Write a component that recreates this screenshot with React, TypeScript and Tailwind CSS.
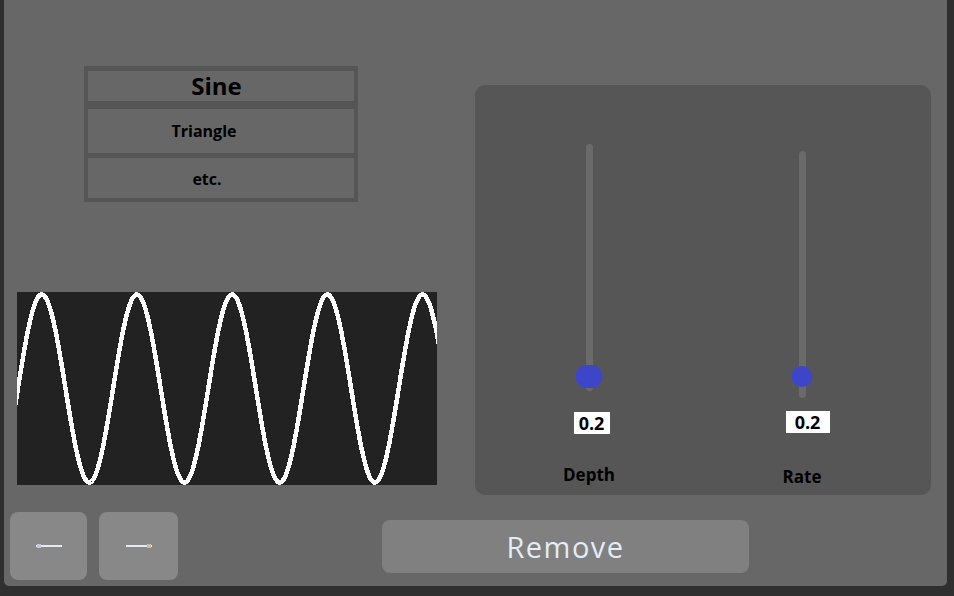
import React from "react";

const W = 420;
const H = 193;

function wavePoints(): string {
  const pts: string[] = [];
  for (let x = -2; x <= W + 2; x += 0.5) {
    const y = 96.5 - 94 * Math.cos((2 * Math.PI * (x - 24.7)) / 95.2);
    pts.push(`${x},${y.toFixed(2)}`);
  }
  return pts.join(" ");
}

function Arrow({ dir }: { dir: "left" | "right" }) {
  return (
    <svg width="28" height="8" viewBox="0 0 28 8" shapeRendering="crispEdges">
      <rect x="1" y="3" width="26" height="2" fill="#e3ecf6" />
      {dir === "left" ? (
        <rect x="2" y="2" width="4" height="4" fill="#b9cbe0" />
      ) : (
        <rect x="22" y="2" width="4" height="4" fill="#c9b9a6" />
      )}
    </svg>
  );
}

export default function App() {
  return (
    <div className="w-[954px] h-[596px] bg-[#2f2f2f] pl-[4px] pr-[7px] pb-[10px] font-['Open_Sans',sans-serif] overflow-hidden">
      <div className="w-full h-full bg-[#676767] rounded-b-[5px] flex flex-col">
        {/* top area */}
        <div className="h-[495px] flex">
          {/* left column */}
          <div className="w-[471px] flex flex-col">
            <div className="mt-[66px] ml-[80px] w-[274px] flex flex-col">
              <div className="h-[39px] border-[4px] border-t-[5px] border-[#555555] flex items-center justify-center pr-[9px]">
                <span className="text-[24px] leading-[30px] font-bold text-black">Sine</span>
              </div>
              <div className="h-[48px] border-x-[4px] border-t-[4px] border-b-0 border-[#555555] flex items-center justify-center pr-[34px]">
                <span className="text-[16px] leading-[22px] font-bold text-black">Triangle</span>
              </div>
              <div className="h-[49px] border-[4px] border-t-[5px] border-[#555555] flex items-center justify-center pr-[28px] pt-[2px]">
                <span className="text-[16px] leading-[22px] font-bold text-black">etc.</span>
              </div>
            </div>
            <div className="mt-[90px] ml-[13px] w-[420px] h-[193px] bg-[#222222]">
              <svg width={W} height={H} viewBox={`0 0 ${W} ${H}`} shapeRendering="crispEdges" className="block">
                <polyline points={wavePoints()} fill="none" stroke="#ffffff" strokeWidth="4.5" />
              </svg>
            </div>
          </div>
          {/* slider panel */}
          <div className="mt-[85px] w-[456px] h-[410px] rounded-[10px] bg-[#565656] flex pl-[74px]">
            {/* Depth */}
            <div className="w-[80px] flex flex-col items-center pt-[59px]">
              <div className="relative w-[7px] h-[247px] rounded-full bg-[#6a6a6a]">
                <div className="absolute left-1/2 -translate-x-1/2 top-[221px] w-[27px] h-[23px] rounded-full bg-[#3d46c9]" />
              </div>
              <div className="mt-[21px] ml-[5px] w-[36px] h-[22px] bg-white flex items-center justify-center">
                <span className="text-[18px] leading-[22px] font-bold text-black">0.2</span>
              </div>
              <div className="mt-[29px] text-[17px] leading-[23px] font-bold text-black">Depth</div>
            </div>
            {/* Rate */}
            <div className="ml-[133px] w-[80px] flex flex-col items-center pt-[66px]">
              <div className="relative w-[7px] h-[247px] rounded-full bg-[#6a6a6a]">
                <div className="absolute left-1/2 -translate-x-1/2 top-[215px] w-[21px] h-[21px] rounded-full bg-[#3d46c9]" />
              </div>
              <div className="mt-[13px] ml-[11px] w-[44px] h-[22px] bg-white flex items-center justify-center">
                <span className="text-[18px] leading-[22px] font-bold text-black">0.2</span>
              </div>
              <div className="mt-[32px] text-[17px] leading-[23px] font-bold text-black">Rate</div>
            </div>
          </div>
        </div>
        {/* bottom row */}
        <div className="mt-[17px] flex items-start">
          <div className="ml-[6px] w-[77px] h-[68px] rounded-[8px] bg-[#888888] flex items-center justify-center">
            <Arrow dir="left" />
          </div>
          <div className="ml-[12px] w-[79px] h-[68px] rounded-[8px] bg-[#888888] flex items-center justify-center">
            <Arrow dir="right" />
          </div>
          <div className="ml-[204px] mt-[8px] w-[367px] h-[53px] rounded-[8px] bg-[#808080] flex items-center justify-center">
            <span className="text-[29px] leading-[36px] font-normal text-[#e4ecf4] tracking-[1.5px]">Remove</span>
          </div>
        </div>
      </div>
    </div>
  );
}
